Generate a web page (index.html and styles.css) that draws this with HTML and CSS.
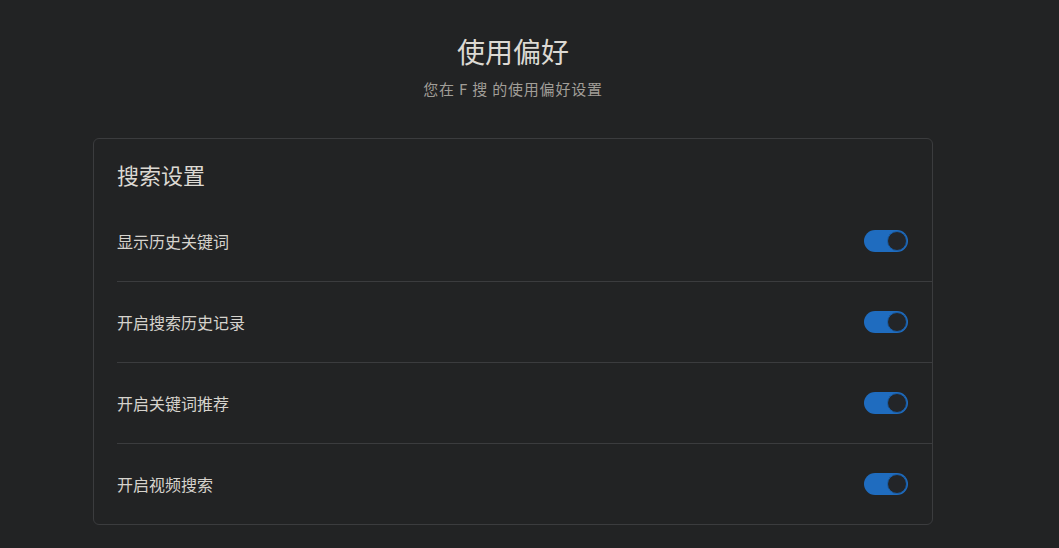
FILE: index.html
```html
<!DOCTYPE html>
<html lang="zh-CN">
<head>
<meta charset="utf-8">
<title>使用偏好</title>
<link rel="stylesheet" href="styles.css">
</head>
<body>
<main class="page">
  <header class="head">
    <h1 class="title">使用偏好</h1>
    <p class="subtitle">您在 F 搜 的使用偏好设置</p>
  </header>
  <section class="card">
    <h2 class="card-title">搜索设置</h2>
    <div class="row">
      <span class="label">显示历史关键词</span>
      <span class="toggle on"><span class="knob"></span></span>
    </div>
    <div class="row">
      <span class="label">开启搜索历史记录</span>
      <span class="toggle on"><span class="knob"></span></span>
    </div>
    <div class="row">
      <span class="label">开启关键词推荐</span>
      <span class="toggle on"><span class="knob"></span></span>
    </div>
    <div class="row">
      <span class="label">开启视频搜索</span>
      <span class="toggle on"><span class="knob"></span></span>
    </div>
  </section>
</main>
</body>
</html>
```

FILE: styles.css
```css
html, body {
  margin: 0;
  padding: 0;
  background: #222324;
}
body {
  font-family: "Noto Sans CJK SC", "Noto Sans", "Liberation Sans", sans-serif;
  color: #d6d3cd;
}
.page {
  width: 1026px;
  padding-top: 32px;
  padding-bottom: 24px;
  display: flex;
  flex-direction: column;
  align-items: center;
}
.head {
  text-align: center;
}
.title {
  margin: 0;
  font-size: 28px;
  line-height: 38px;
  font-weight: 400;
  color: #dcd9d3;
}
.subtitle {
  margin: 9px 0 0;
  font-size: 15px;
  line-height: 20px;
  letter-spacing: 0.8px;
  color: #a19e98;
}
.card {
  margin-top: 39px;
  width: 838px;
  border: 1px solid #3b3c3e;
  border-radius: 6px;
  box-sizing: content-box;
}
.card-title {
  margin: 0;
  padding: 20px 23px 12px;
  font-size: 22px;
  line-height: 30px;
  font-weight: 400;
  color: #dcd9d3;
}
.row {
  margin-left: 23px;
  padding-right: 24px;
  height: 80px;
  display: flex;
  align-items: center;
  justify-content: space-between;
  border-bottom: 1px solid #3b3c3e;
}
.row:last-child {
  border-bottom: none;
}
.label {
  font-size: 16px;
  line-height: 22px;
  color: #d6d3cd;
}
.toggle {
  width: 44px;
  height: 22px;
  border-radius: 11px;
  background: #1f6cbf;
  display: flex;
  align-items: center;
  justify-content: flex-end;
  padding: 0 1px;
  box-sizing: border-box;
}
.knob {
  width: 20px;
  height: 20px;
  border-radius: 50%;
  background: #232528;
  box-sizing: border-box;
  border: 1.5px solid #1a5ea8;
}
```
